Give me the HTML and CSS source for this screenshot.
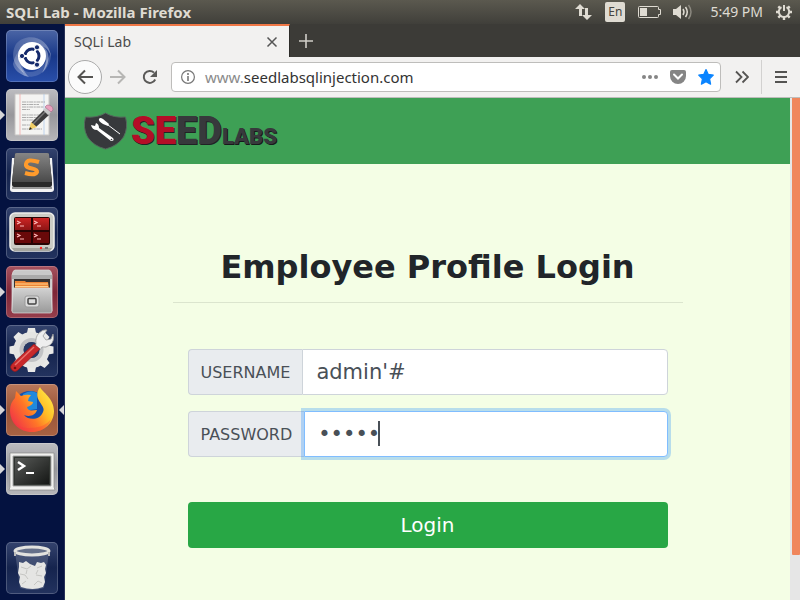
FILE: index.html
```html
<!DOCTYPE html>
<html lang="en">
<head>
<meta charset="utf-8">
<title>SQLi Lab</title>
<link rel="stylesheet" href="styles.css">
</head>
<body>
<header class="panel">
  <span class="panel-title">SQLi Lab - Mozilla Firefox</span>
  <div class="indicators">
    <svg width="18" height="18" viewBox="0 0 18 18" fill="#dfdbd2"><path d="M5 1l5 5H7v7H4V6H0zM10 5h3v7h4l-5 5-5-5h3z"/></svg>
    <span class="lang">En</span>
    <svg width="24" height="14" viewBox="0 0 24 14"><path d="M2.500 1.500h18q1 0 1 1v2h2v5h-2v2q0 1-1 1h-18q-1 0-1-1v-9q0-1 1-1z" fill="none" stroke="#dfdbd2"/><path d="M3 3h7v8H3z" fill="#dfdbd2"/></svg>
    <svg width="20" height="18" viewBox="0 0 20 18" fill="none" stroke="#dfdbd2" stroke-width="1.500"><path d="M0 6h3l5-4v14l-5-4H0z" fill="#dfdbd2" stroke="none"/><path d="M10 6q2 3 0 6M12.500 4q3.500 5 0 10"/><path d="M15.500 2q5 7 0 14" stroke="#8b887f"/></svg>
    <time class="clock">5:49 PM</time>
    <svg width="18" height="18" viewBox="0 0 18 18" fill="none" stroke="#dfdbd2"><path d="M6.500 4.200a5.200 5.200 0 1 0 5 0M9 2v6" stroke-width="2"/><path d="M1 9h3M14 9h3M9 14v3M3.300 3.300l2 2M14.700 3.300l-2 2M3.300 14.700l2-2M14.700 14.700l-2-2" stroke-width="2.400"/></svg>
  </div>
</header>
<div class="desktop">
  <nav class="launcher" aria-label="Launcher">
    <button class="tile dash" aria-label="Dash">
      <svg viewBox="0 0 52 52"><defs><linearGradient id="sw" x1="0" y1="0" x2="1" y2="1"><stop offset="0" stop-color="#fff" stop-opacity=".1"/><stop offset="1" stop-color="#fff" stop-opacity=".5"/></linearGradient></defs>
      <path d="M10 14C20 2 43 6 45 27C43 16 31 11 20 18C12 23 12 34 18 43C6 35 5 23 10 14z" fill="url(#sw)"/><path d="M7 34C10 20 19 13 28 13C44 14 47 32 36 43C45 28 37 18 25 18C14 20 12 36 23 47C14 45 8 40 7 34z" fill="url(#sw)"/><path d="M14 36C20 46 36 45 45 22C46 39 32 50 18 46z" fill="#fff" opacity=".15"/><circle cx="26" cy="26" r="14" fill="#fff"/><circle cx="26" cy="26" r="7" fill="none" stroke="#14296b" stroke-width="3"/><path d="M26 26l7-12M26 26l7 12M26 26H12" stroke="#fff" stroke-width="2"/><circle cx="26" cy="26" r="5" fill="#fff"/><g fill="#14296b" stroke="#fff"><circle cx="16" cy="26" r="2.600"/><circle cx="31" cy="17.300" r="2.600"/><circle cx="31" cy="34.700" r="2.600"/></g></svg>
    </button>
    <button class="tile silver running" aria-label="Text Editor">
      <svg viewBox="0 0 52 52"><path d="M9 5h34v41H9z" fill="#f4f4f2" stroke="#c7c5c3"/><path d="M14 5v41" stroke="#f2a0a0" stroke-width=".7"/><path d="M38 5v41" stroke="#a7c4ed" stroke-width=".7"/><path d="M16 13h23M16 15.500h17M16 18h22M16 20.500h8M16 26h20M16 28.500h17M16 31h14M16 36h8M16 40h20" stroke="#999" stroke-width=".8" stroke-dasharray="4 .6 2 .6"/><path d="M25 34l13-13 5 5-13 12z" fill="#3d3d3d"/><path d="M27 35l13-13" stroke="#777" stroke-width="1.500"/><path d="M25 33l6 5-8 3z" fill="#f0ce64"/><path d="M24 38l2 2-3 1z" fill="#222"/><path d="M37 21l3-3 5 5-3 3z" fill="#c9c9c9"/><path d="M39 18l2-2q6 0 6 5l-2 2z" fill="#e9a2be" stroke="#a66686" stroke-width=".6"/></svg>
    </button>
    <button class="tile glass" aria-label="Sublime Text">
      <svg viewBox="0 0 52 52"><defs><linearGradient id="key" x2="0" y2="1"><stop stop-color="#858585"/><stop offset="1" stop-color="#4a4a4a"/></linearGradient></defs><path d="M6 10h40l2 31q0 3-3 3H7q-3 0-3-3z" fill="#f4f4f4"/><path d="M6 39h40v2H6z" fill="#999"/><path d="M9 6q0-1 2-1h30q2 0 2 1l3 28v3q0 2-2 2H8q-2 0-2-2v-3z" fill="#292929"/><path d="M9 6q0-1 2-1h30q2 0 2 1l3 28H6z" fill="url(#key)"/><path d="M33 14q-12-4-13 2c-1 6 12 3 11 8q-2 4-12 1" fill="none" stroke="#ff9b2c" stroke-width="4"/></svg>
    </button>
    <button class="tile glass" aria-label="Terminator">
      <svg viewBox="0 0 52 52"><defs><linearGradient id="red" x2="0" y2="1"><stop stop-color="#cc2423"/><stop offset="1" stop-color="#8d1515"/></linearGradient></defs><rect x="4" y="6" width="44" height="38" rx="5" fill="#cbccc5" stroke="#eeeeea" stroke-width="1.500"/><path d="M6 41h40l-2 3H8z" fill="#a5a69f"/><rect x="8" y="10" width="36" height="28" rx="2" fill="#280404"/><path d="M9 11h16v12H9zM27 11h16v12H27z" fill="url(#red)"/><path d="M9 25h16v11H9zM27 25h16v11H27z" fill="#690909"/><path d="M11 14l3 1.500-3 1.500M14 19h4M28 14l3 1.500-3 1.500M31 19h4M11 27l3 1.500-3 1.500M14 32h4M28 27l3 1.500-3 1.500M31 32h4" fill="none" stroke="#ffb8b8" stroke-width="1.200"/><circle cx="35" cy="41" r="1.200" fill="#f22"/><path d="M39 40h3v2h-3z" fill="#777"/></svg>
    </button>
    <button class="tile maroon running" aria-label="Files">
      <svg viewBox="0 0 52 52"><defs><linearGradient id="cab" x2="0" y2="1"><stop stop-color="#d2d2d2"/><stop offset="1" stop-color="#999"/></linearGradient></defs><path d="M9 4h34q2 0 3 5v36H6V9q1-5 3-5z" fill="#c9c9c9" stroke="#ddd" stroke-width=".7"/><path d="M6 9h40v4H6z" fill="#aaa"/><path d="M8 13h36v9H8z" fill="#383332"/><path d="M9 15h10l1 1h22l1 6H9z" fill="#ed8434"/><path d="M9 18h33M9 20.500h33" stroke="#ffd28e" stroke-width="1"/><path d="M7 22h38l1 23q0 2-2 2H8q-2 0-2-2z" fill="url(#cab)" stroke="#ddd" stroke-width=".7"/><rect x="19" y="30" width="14" height="11" rx="2" fill="#ddd" stroke="#999"/><rect x="22" y="32.500" width="8" height="5.500" rx="1" fill="#ddd" stroke="#444" stroke-width="1.500"/></svg>
    </button>
    <button class="tile glass" aria-label="System Settings">
      <svg viewBox="0 0 52 52"><g fill="#e9e9e7"><path id="tooth" d="M21 8l1-5h7l1 5v5h-9z"/><use href="#tooth" transform="rotate(45 25.500 25)"/><use href="#tooth" transform="rotate(90 25.500 25)"/><use href="#tooth" transform="rotate(135 25.500 25)"/><use href="#tooth" transform="rotate(180 25.500 25)"/><use href="#tooth" transform="rotate(225 25.500 25)"/><use href="#tooth" transform="rotate(270 25.500 25)"/><use href="#tooth" transform="rotate(315 25.500 25)"/></g><circle cx="25.500" cy="25" r="13" fill="none" stroke="#e5e5e3" stroke-width="10"/><circle cx="25.500" cy="25" r="10" fill="none" stroke="#c2c3c5" stroke-width="4"/><circle cx="25.500" cy="25" r="8" fill="#293964"/><path d="M30 19q-1-7 3-11 4-4 8-3l-4 6 3 4 5-1 2-5q2 7-3 11-4 3-8 2l-2 3-5-4z" fill="#eee" stroke="#999" stroke-width=".8"/><path d="M28 19l6 5-22 21q-3 3-6 0-3-3 0-6z" fill="#c8282a" stroke="#8d1416" stroke-width=".6"/><path d="M28 22L9 40" stroke="#e8706a" stroke-width="1.500"/><circle cx="9" cy="43" r="1.300" fill="#701010"/></svg>
    </button>
    <button class="tile copper running active" aria-label="Firefox">
      <svg viewBox="0 0 52 52"><defs><linearGradient id="fox" x1="1" x2="0" y1=".1" y2=".8"><stop stop-color="#fff14e"/><stop offset=".35" stop-color="#ffbd26"/><stop offset=".6" stop-color="#ff7627"/><stop offset="1" stop-color="#ef2e4a"/></linearGradient></defs><circle cx="24" cy="24" r="17" fill="#1550ac"/><path d="M17 10q8-5 14-1v16l-13 2z" fill="#2089dc"/><path d="M34 3c2 5 14 11 14 24C48 39 38 48 26 48S4 39 4 26c0-5 2-9 5-12l1-7 5 5q5-2 10-1-3 3-3 6l5 1q0 3-6 5c1 5 6 3 10 3-2 6-8 7-13 5 5 6 16 5 19-3C41 21 25 16 34 3z" fill="url(#fox)"/><path d="M4 25c0 14 9 20 20 19 10 0 18-4 21-9-3 9-10 13-19 13C12 48 3 38 4 25z" fill="#fb3343" opacity=".3"/></svg>
    </button>
    <button class="tile silver running" aria-label="Terminal">
      <svg viewBox="0 0 52 52"><defs><linearGradient id="term" x1="0" y1="0" x2="1" y2="1"><stop stop-color="#575957"/><stop offset="1" stop-color="#151715"/></linearGradient></defs><path d="M4 10h44v34l1 3H3l1-3z" fill="#f1f1ef" stroke="#888" stroke-width=".7"/><path d="M7 13h38v30H7z" fill="#303430" stroke="#aaa"/><path d="M9 15h34v26H9z" fill="url(#term)"/><path d="M12 19l6 4-6 4" fill="none" stroke="#fff" stroke-width="2.500"/><path d="M20 30h8" stroke="#fff" stroke-width="2"/></svg>
    </button>
    <button class="tile glass trash" aria-label="Trash">
      <svg viewBox="0 0 52 52"><path d="M9 10h34l-5 36q-12 4-24 0z" fill="#677491" opacity=".5"/><path d="M13 20l4 1 3-2 4 3 5 2 2-4 4 1 3-1 2 3-1 4 1 4-2 4 1 5-2 5q-10 4-22 0l-2-5 1-5-2-4 1-6z" fill="#e5e5e3"/><path d="M15 25l6 2 4-3M31 26l5-2M14 32l5 1 3 4M30 33l6 1M16 42l4-3M28 43l4-4 4 2M21 28l-1 4M32 28l-2 4" stroke="#c5c5c2" fill="none"/><ellipse cx="26" cy="9" rx="17" ry="4" fill="#65708a" stroke="#e2e2df" stroke-width="3"/><path d="M9 10v4M43 10v4" stroke="#bbb" stroke-width="2"/></svg>
    </button>
  </nav>
  <section class="browser">
    <div class="tabs">
      <div class="tab"><span>SQLi Lab</span><button aria-label="Close tab"><svg width="12" height="12" viewBox="0 0 12 12"><path d="M1.500 1.500l9 9M10.500 1.500l-9 9" stroke="#555" stroke-width="1.500"/></svg></button></div>
      <button class="newtab" aria-label="New tab"><svg width="14" height="14" viewBox="0 0 14 14"><path d="M7 0v14M0 7h14" stroke="#d0cec8" stroke-width="1.600"/></svg></button>
    </div>
    <div class="toolbar">
      <button class="back" aria-label="Back"><svg width="16" height="16" viewBox="0 0 16 16" fill="none" stroke="#555452" stroke-width="2"><path d="M16 8H1.500M8 1.500L1.500 8 8 14.500"/></svg></button>
      <button class="forward" aria-label="Forward"><svg width="16" height="16" viewBox="0 0 16 16" fill="none" stroke="#b7b6b4" stroke-width="2"><path d="M0 8h14.500M8 1.500L14.500 8 8 14.500"/></svg></button>
      <button class="reload" aria-label="Reload"><svg width="16" height="16" viewBox="0 0 16 16"><path d="M13.200 10.500A6 6 0 1 1 12 3.600" fill="none" stroke="#5b5a58" stroke-width="2"/><path d="M15 1v7H8z" fill="#5b5a58"/></svg></button>
      <div class="urlbar">
        <svg width="14" height="14" viewBox="0 0 14 14" fill="none" stroke="#777"><circle cx="7" cy="7" r="6.400" stroke-width="1.200"/><path d="M7 6v5M7 3v2" stroke-width="1.600"/></svg>
        <span class="address"><span class="sub">www.</span>seedlabsqlinjection.com</span>
        <button aria-label="Page actions"><svg width="16" height="16" viewBox="0 0 16 16" fill="#858585"><circle cx="2" cy="8" r="2"/><circle cx="8" cy="8" r="2"/><circle cx="14" cy="8" r="2"/></svg></button>
        <button aria-label="Save to Pocket"><svg width="16" height="16" viewBox="0 0 16 16"><path d="M2 1h12q2 0 2 2v4a8 8 0 0 1-16 0V3q0-2 2-2z" fill="#858585"/><path d="M4 5.500l4 4 4-4" fill="none" stroke="#fff" stroke-width="2" stroke-linecap="round"/></svg></button>
        <button aria-label="Bookmark"><svg width="16" height="18" viewBox="1 0 16 18"><path d="M9 1.500l2.300 4.900 5 .7-3.700 3.700 1 5.400L9 13.700l-4.600 2.500 1-5.400-3.700-3.700 5-.7z" fill="#0a84ff" stroke="#0a84ff" stroke-width="1.200" stroke-linejoin="round"/></svg></button>
      </div>
      <button class="more" aria-label="More tools"><svg width="14" height="14" viewBox="0 0 14 14" fill="none" stroke="#555452" stroke-width="1.800"><path d="M1 1.500L6.500 7 1 12.500M7.500 1.500L13 7l-5.500 5.500"/></svg></button>
      <button class="menu" aria-label="Menu"><svg width="12" height="12" viewBox="0 0 12 12"><path d="M0 1h12M0 6h12M0 11h12" stroke="#555452" stroke-width="2"/></svg></button>
    </div>
    <div class="viewport">
      <div class="page">
        <div class="navbar">
          <a class="logo" href="#" aria-label="Seed Labs">
            <svg width="46" height="38" viewBox="0 0 46 38"><path d="M22.500 1q8 5 20 4 3 11-2 20-6 9-18 12-12-3-18-12-5-9-2-20 12 1 20-4z" fill="#37393c" stroke="#55685d"/><path d="M16 7q1-2 4 0l6 5-1 2-5-2q-5-3-4-5z" fill="#fff"/><path d="M25 13l12 9" stroke="#fff"/><path d="M8 13l4 1 1-3q3 1 3 5l14 10q2 3-2 3L14 18q-5 0-6-5z" fill="#fff"/><circle cx="28.500" cy="27.500" r=".8" fill="#37393c"/></svg>
            <span class="seed">SE<span class="dark">ED</span></span><span class="labs">LABS</span>
          </a>
        </div>
        <main class="container">
          <h1>Employee Profile Login</h1>
          <form>
            <div class="field"><label for="user">USERNAME</label><input id="user" type="text" value="admin'#"></div>
            <div class="field focused"><label for="pass">PASSWORD</label><div class="entry"><input id="pass" type="password" value="admin"><span class="caret"></span></div></div>
            <button class="login" type="button">Login</button>
          </form>
        </main>
      </div>
      <div class="scrollbar"><div class="thumb"></div></div>
    </div>
  </section>
</div>
</body>
</html>
```
FILE: styles.css
```css
* { box-sizing: border-box; }
body { margin: 0; height: 100vh; display: flex; flex-direction: column; overflow: hidden; font-family: "Noto Sans", sans-serif; font-size: 14px; }
button { border: 0; padding: 0; background: none; display: flex; align-items: center; justify-content: center; font: inherit; }
svg { display: block; flex: none; }

.panel { flex: none; height: 24px; display: flex; align-items: center; justify-content: space-between; padding: 0 7px 0 6px; background: linear-gradient(#5b594f, #403f3a); color: #dfdbd2; }
.panel-title { font-weight: bold; font-size: 15px; line-height: 24px; }
.indicators { display: flex; align-items: center; gap: 12px; }
.lang { width: 20px; height: 20px; border-radius: 2px; background: #dfdbd2; color: #45443f; font-size: 12px; line-height: 20px; text-align: center; }
.clock { margin-left: 5px; line-height: 24px; }

.desktop { flex: 1; min-height: 0; display: flex; }
.launcher { flex: none; width: 65px; padding: 6px; display: flex; flex-direction: column; gap: 7px; background: #041240; border-right: 1px solid #283158; }
.tile { position: relative; flex: none; width: 52px; height: 52px; border-radius: 5px; box-shadow: inset 0 0 0 1px #ffffff33; }
.tile svg { width: 52px; height: 52px; }
.dash { background: linear-gradient(#4b65a5, #183889 50%, #294faa); }
.silver { background: linear-gradient(#bdbdc1, #97979b 50%, #b7b7ba); }
.glass { background: linear-gradient(#34436e, #15244e 50%, #23335f); }
.maroon { background: linear-gradient(#a7525f, #7d2637 50%, #963e4c); }
.copper { background: linear-gradient(#b9775a, #985438 50%, #a96243); }
.running::before { content: ""; position: absolute; left: -6px; top: 21px; border: 5px solid transparent; border-left-color: #d5d5d8; border-right: 0; }
.active::after { content: ""; position: absolute; right: -6px; top: 21px; border: 5px solid transparent; border-right-color: #d5d5d8; border-left: 0; }
.trash { margin-top: auto; }

.browser { flex: 1; min-width: 0; display: flex; flex-direction: column; }
.tabs { flex: none; height: 33px; display: flex; background: #3c3b37; }
.tab { width: 225px; display: flex; align-items: center; justify-content: space-between; padding: 0 11px 0 9px; background: #f2f1f0; border-top: 2px solid #f07746; border-right: 1px solid #2d2c29; color: #4c4c4c; }
.newtab { width: 32px; }
.toolbar { flex: none; height: 41px; display: flex; align-items: center; padding: 0 0 0 3px; background: #f2f1f0; border-bottom: 1px solid #bebdbb; }
.back { width: 34px; height: 34px; border: 1px solid #aaa; border-radius: 50%; background: #fbfbfb; }
.forward, .reload { width: 32px; height: 32px; }
.urlbar { flex: 1; min-width: 0; height: 30px; display: flex; align-items: center; gap: 12px; margin-left: 5px; padding: 0 6px 0 9px; border: 1px solid #bebdbb; border-radius: 4px; background: #fff; color: #333; }
.address { flex: 1; margin-left: -2px; font-size: 15px; }
.sub { color: #8b8b8b; }
.more { width: 41px; height: 34px; padding-left: 2px; border-right: 1px solid #d2d1d0; }
.menu { width: 38px; height: 34px; }

.viewport { flex: 1; min-height: 0; display: flex; }
.page { flex: 1; min-width: 0; background: #f4fee5; font-family: "DejaVu Sans", sans-serif; color: #212529; }
.navbar { height: 66px; padding: 0 18px; background: #3ea055; display: flex; align-items: center; }
.logo { display: flex; align-items: baseline; color: #37393c; text-decoration: none; font-family: Roboto, sans-serif; font-weight: 900; line-height: 38px; }
.logo svg { align-self: center; }
.seed { margin: 6px 0 0 2px; color: #b40d27; font-size: 38px; text-shadow: 1px 1px #202225; }
.dark { color: #37393c; }
.labs { font-size: 22px; text-shadow: 1px 1px #17191b; }
.container { max-width: 510px; margin: 0 auto; padding-top: 84px; }
h1 { margin: 0; padding-bottom: 16px; border-bottom: 1px solid #dbe5ce; font-size: 32px; line-height: 38px; text-align: center; }
form { padding: 46px 15px 0; display: flex; flex-direction: column; gap: 16px; }
.field { height: 46px; display: flex; }
.field label { display: flex; align-items: center; padding: 0 12px; border: 1px solid #ced4da; border-right: 0; border-radius: 4px 0 0 4px; background: #e9ecef; color: #495057; font-size: 16px; }
.field input { flex: 1; min-width: 0; width: 100%; height: 100%; padding: 0 13px; border: 1px solid #ced4da; border-radius: 0 4px 4px 0; background: #fff; color: #495057; font-family: inherit; font-size: 21px; outline: 0; }
.entry { position: relative; flex: 1; min-width: 0; }
.focused input { border-color: #80bdff; box-shadow: 0 0 0 3px #007bff40; }
.caret { position: absolute; left: 74px; top: 10px; width: 2px; height: 25px; background: #495057; }
.login { height: 46px; margin-top: 29px; border-radius: 4px; background: #28a745; color: #fff; font-size: 20px; }
.scrollbar { flex: none; width: 10px; padding-left: 2px; background: #e6e6e6; }
.thumb { height: 91%; background: #f0865c; border-radius: 0 0 1px 1px; }
```
